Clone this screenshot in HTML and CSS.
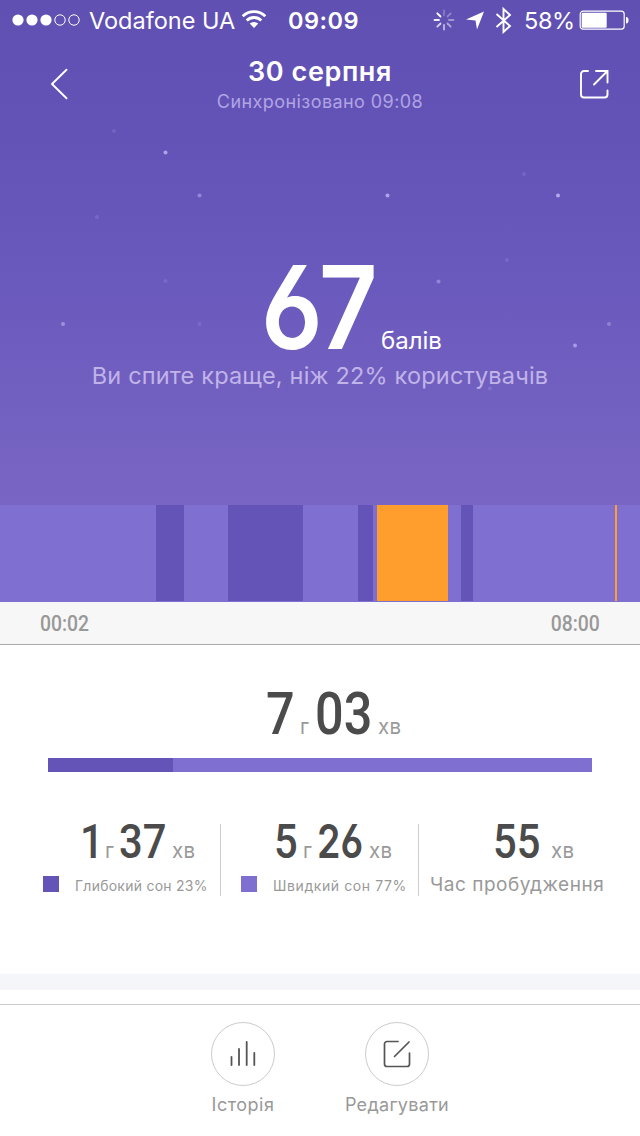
FILE: index.html
```html
<!DOCTYPE html>
<html lang="uk">
<head>
<meta charset="utf-8">
<title>Сон</title>
<link rel="stylesheet" href="styles.css">
</head>
<body>
<main class="screen">
  <section class="hero">
    <svg class="stars" viewBox="0 0 640 505" fill="#cfc3ff">
      <circle cx="165.500" cy="152.500" r="2" opacity=".7"/><circle cx="199.500" cy="195.500" r="2" opacity=".45"/>
      <circle cx="387.500" cy="195.500" r="2" opacity=".7"/><circle cx="558" cy="195.500" r="2" opacity=".75"/>
      <circle cx="114" cy="131" r="2" opacity=".15"/><circle cx="97" cy="217" r="2" opacity=".15"/>
      <circle cx="524" cy="174" r="2" opacity=".15"/><circle cx="507" cy="260" r="2" opacity=".15"/>
      <circle cx="165.500" cy="281" r="2" opacity=".15"/><circle cx="199.500" cy="324" r="2" opacity=".15"/>
      <circle cx="438.500" cy="281.500" r="2" opacity=".4"/><circle cx="63" cy="324" r="2" opacity=".5"/>
      <circle cx="609" cy="324" r="2" opacity=".35"/><circle cx="575" cy="345.500" r="2" opacity=".6"/>
      <circle cx="490" cy="388.500" r="2" opacity=".2"/>
    </svg>
    <header class="status">
      <svg class="signal" width="70" height="14" viewBox="0 0 70 14" fill="#fff"><circle cx="6" cy="7" r="5.600"/><circle cx="20" cy="7" r="5.600"/><circle cx="34" cy="7" r="5.600"/><g fill="none" stroke="#fff"><circle cx="48" cy="7" r="5.200"/><circle cx="62" cy="7" r="5.200"/></g></svg>
      <span class="carrier">Vodafone UA</span>
      <svg class="wifi" width="26" height="20" viewBox="0 0 26 20" fill="none" stroke="#fff" stroke-width="2.800"><path d="M1.700 7.200a16 16 0 0 1 22.600 0M5.700 11.500a10.400 10.400 0 0 1 14.600 0"/><path d="M8.700 14.600a6.300 6.300 0 0 1 8.600 0L13 19z" fill="#fff" stroke="none"/></svg>
      <time class="clock">09:09</time>
      <svg class="spinner" width="22" height="22" viewBox="-11 -11 22 22" stroke="#fff" stroke-width="1.800" stroke-linecap="round"><path d="M0-5v-4.500" opacity=".25"/><path d="M3.500-3.500l3.200-3.200" opacity=".3"/><path d="M5 0h4.500" opacity=".4"/><path d="M3.500 3.500l3.200 3.200" opacity=".5"/><path d="M0 5v4.500" opacity=".6"/><path d="M-3.500 3.500l-3.200 3.200" opacity=".75"/><path d="M-5 0h-4.500" opacity=".9"/><path d="M-3.500-3.500l-3.200-3.200"/></svg>
      <svg class="locate" width="20" height="20" viewBox="0 0 20 20" fill="#fff"><path d="M19 1.500L12 19.500l-1.500-9L1 9.500z"/></svg>
      <svg class="bluetooth" width="18" height="28" viewBox="0 0 18 28" fill="none" stroke="#fff" stroke-width="1.900"><path d="M1.500 8L15 20 8.500 26V3L15 9 1.500 21"/></svg>
      <span class="percent">58%</span>
      <svg class="battery" width="50" height="20" viewBox="0 0 50 20"><rect x="1.200" y="1.200" width="44" height="18" rx="3" fill="none" stroke="#fff" stroke-width="1.200"/><rect x="2.700" y="2.800" width="25" height="15" rx="1" fill="#fff"/><path d="M47 7q2.500 0 2.500 3.300t-2.500 3.300z" fill="#fff"/></svg>
    </header>
    <nav class="nav">
      <svg class="back" width="20" height="34" viewBox="0 0 20 34" fill="none" stroke="#fff" stroke-width="1.900" stroke-linecap="round" stroke-linejoin="round"><path d="M16.500 2.700L2 17l14.500 14.300"/></svg>
      <div class="heading"><h1 class="date">30 серпня</h1><p class="sync">Синхронізовано 09:08</p></div>
      <svg class="share" width="30" height="30" viewBox="0 0 30 30" fill="none" stroke="#fff" stroke-width="1.900" stroke-linecap="round"><path d="M8 2H4a3 3 0 0 0-3 3v20.500a3 3 0 0 0 3 3h20.500a3 3 0 0 0 3-3V21.500M14 15.500L27 2.500M16 2h11.500v11.500"/></svg>
    </nav>
    <div class="score"><span class="score-value">67</span><span class="score-unit">балів</span></div>
    <p class="compare">Ви спите краще, ніж 22% користувачів</p>
    <div class="phases">
      <i class="light p1"></i><i class="deep p2"></i><i class="light p3"></i><i class="deep p4"></i><i class="light p5"></i><i class="deep p6"></i><i class="light p7"></i><i class="awake p8"></i><i class="light p9"></i><i class="deep p10"></i><i class="light p11"></i><i class="awake p12"></i>
    </div>
  </section>
  <div class="range"><time class="narrow">00:02</time><time class="narrow end">08:00</time></div>
  <section class="summary">
    <div class="total"><span class="digits big t7">7</span><span class="unit u1">г</span><span class="digits big t03">03</span><span class="unit">хв</span></div>
    <div class="bar"><i class="bar-deep"></i></div>
    <div class="stats">
      <article class="stat first">
        <div class="amount"><span class="digits mid d1">1</span><span class="unit g">г</span><span class="digits mid d2">37</span><span class="unit">хв</span></div>
        <div class="legend"><i class="swatch deep"></i><span>Глибокий сон 23%</span></div>
      </article>
      <article class="stat second">
        <div class="amount"><span class="digits mid d1">5</span><span class="unit g">г</span><span class="digits mid d2 open">26</span><span class="unit">хв</span></div>
        <div class="legend"><i class="swatch light"></i><span>Швидкий сон 77%</span></div>
      </article>
      <article class="stat third">
        <div class="amount"><span class="digits mid d55">55</span><span class="unit">хв</span></div>
        <p class="awake-label">Час пробудження</p>
      </article>
    </div>
  </section>
  <div class="divider"></div>
  <footer class="actions">
    <button class="action history"><span class="ring"><svg width="28" height="28" viewBox="0 0 28 28" fill="none" stroke="#555" stroke-width="1.800" stroke-linecap="round"><path d="M2.500 17v8M10 9v16M17.700 2v23M25.300 13v12"/></svg></span><span>Історія</span></button>
    <button class="action edit"><span class="ring"><svg width="28" height="28" viewBox="0 0 28 28" fill="none" stroke="#555" stroke-width="1.700" stroke-linecap="round"><path d="M15 1.500H4A2.500 2.500 0 0 0 1.500 4v20A2.500 2.500 0 0 0 4 26.500h20a2.500 2.500 0 0 0 2.500-2.500V13M11.500 16.500L26 2"/></svg></span><span>Редагувати</span></button>
  </footer>
</main>
</body>
</html>
```
FILE: styles.css
```css
* { box-sizing: border-box; margin: 0; padding: 0; }
body { font-family: Inter, "Noto Sans", sans-serif; background: #fff; }
svg { display: block; flex: none; }
i { display: block; }
.screen { width: 640px; height: 1136px; overflow: hidden; background: #fff; }
.hero { position: relative; height: 602px; background: linear-gradient(#5f50b2 0, #6453b7 130px, #6b5abd 290px, #7966c4 505px); color: #fff; display: flex; flex-direction: column; }
.stars { position: absolute; left: 0; top: 0; width: 640px; height: 505px; }

.status { height: 40px; display: flex; align-items: center; padding-left: 12px; font-size: 23.500px; line-height: 40px; white-space: nowrap; }
.status span, .status time { padding-top: 2px; }
.signal { width: 70px; }
.carrier { width: 152px; margin-left: 7px; letter-spacing: 0; }
.wifi { margin-top: -3px; }
.clock { width: 145px; margin-left: 21px; font-weight: 600; letter-spacing: .5px; }
.locate { margin-left: 10px; }
.bluetooth { margin-left: 10px; }
.percent { width: 55px; margin-left: 11px; letter-spacing: -.4px; }

.nav { height: 90px; display: grid; grid-template-columns: 160px 320px 160px; }
.back { margin: 27px 0 0 50px; }
.share { margin: 29px 0 0 100px; }
.heading { text-align: center; padding-top: 13px; white-space: nowrap; }
.date { font-size: 27px; line-height: 37px; font-weight: 600; letter-spacing: .6px; }
.sync { font-size: 18px; line-height: 23px; letter-spacing: .43px; color: #b0a4e4; }

.digits { display: block; font-family: Roboto, sans-serif; font-weight: 500; transform-origin: left; white-space: nowrap; }
.score { height: 230px; padding: 118px 0 0 261px; display: flex; align-items: baseline; }
.score-value { width: 120px; font: 560 115px/120px Inter, sans-serif; font-feature-settings: "ss01"; transform: scaleX(.89); transform-origin: left; }
.score-unit { font-size: 24px; letter-spacing: 0; }
.compare { height: 145px; line-height: 32px; font-size: 23.500px; letter-spacing: .18px; color: #c0b3e8; text-align: center; white-space: nowrap; }

.phases { height: 97px; display: flex; background: #7e6fd0; padding-bottom: 1px; }
.light { background: #7e6fd0; }
.deep { background: #6554b8; }
.awake { background: #ff9d2d; }
.p1 { width: 156px; } .p2 { width: 28px; } .p3 { width: 44px; } .p4 { width: 75px; }
.p5 { width: 55px; } .p6 { width: 15px; } .p7 { width: 4px; } .p8 { width: 71px; }
.p9 { width: 13px; } .p10 { width: 12px; } .p11 { width: 142px; } .p12 { width: 2px; }

.range { height: 43px; display: flex; justify-content: space-between; padding: 0 40px; background: #f7f7f7; border-bottom: 1px solid #aaa; color: #999; font: 500 22px/43px Roboto, sans-serif; }
.narrow { transform: scaleX(.88); transform-origin: left; }
.end { transform-origin: right; }

.summary { height: 329px; color: #4b4b4b; }
.total { height: 113px; padding: 34px 0 0 266px; display: flex; align-items: baseline; }
.big { font-size: 60px; line-height: 70px; transform: scaleX(.84); }
.t7 { width: 34px; }
.t03 { width: 63px; }
.unit { color: #999; font-size: 20.500px; letter-spacing: .4px; }
.u1 { width: 15px; }
.bar { height: 14px; margin: 0 48px; background: #7e6fd0; }
.bar-deep { width: 125px; height: 14px; background: #6554b8; }
.stats { display: flex; padding: 52px 0 0 27px; }
.stat { height: 72px; white-space: nowrap; }
.first { width: 194px; border-right: 1px solid #ccc; }
.second { width: 198px; border-right: 1px solid #ccc; }
.third { width: 198px; }
.amount { display: flex; align-items: baseline; height: 50px; }
.first .amount, .second .amount { padding-left: 53px; }
.third .amount { padding-left: 74px; }
.mid { font-size: 48.500px; line-height: 36px; transform: scaleX(.86); }
.open { font: 600 47px/34px Inter, sans-serif; font-feature-settings: "ss01"; transform: scaleX(.8); }
.d1 { width: 25px; }
.g { width: 14px; }
.d2 { width: 53px; }
.d55 { width: 58px; }
.second .d1 { width: 29px; }
.second .d2 { width: 52px; }
.legend { display: flex; align-items: center; height: 20px; padding-left: 16px; font-size: 14px; letter-spacing: .25px; color: #999; }
.legend span { padding-top: 3px; }
.second .legend { padding-left: 20px; letter-spacing: .6px; }
.swatch { width: 16px; height: 16px; margin-right: 16px; }
.awake-label { font-size: 19px; line-height: 21px; letter-spacing: .52px; padding-left: 11px; color: #999; }

.divider { height: 16px; background: #f5f6f9; }
.actions { height: 132px; margin-top: 14px; border-top: 1px solid #ccc; display: flex; justify-content: center; padding-top: 17px; }
.action { width: 154px; height: 105px; border: 0; background: none; color: #999; font-family: inherit; display: flex; flex-direction: column; align-items: center; font-size: 18px; line-height: 22px; gap: 8px; }
.history { letter-spacing: .5px; }
.edit { letter-spacing: .3px; }
.ring { width: 64px; height: 64px; border: 1px solid #ccc; border-radius: 50%; display: grid; place-items: center; }
```
